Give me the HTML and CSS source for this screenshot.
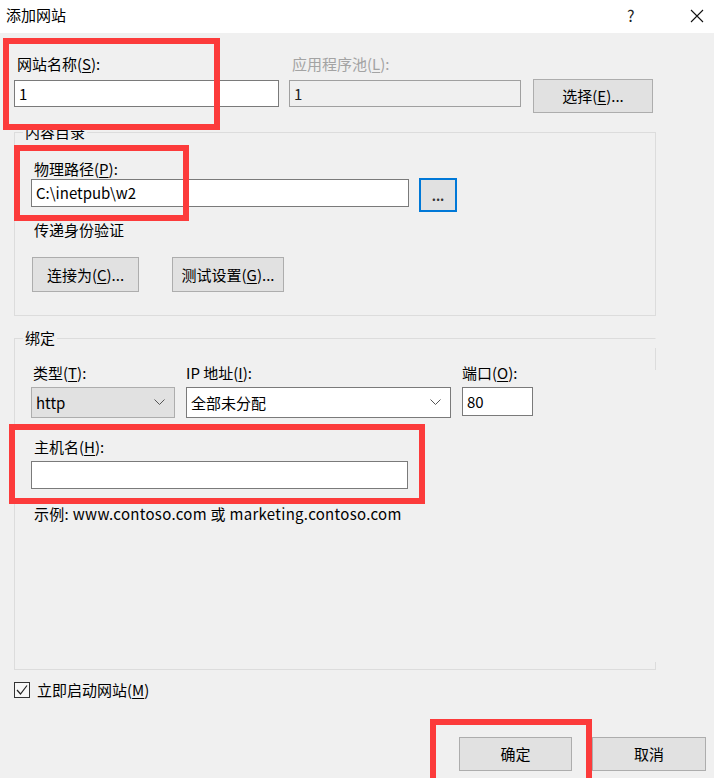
FILE: index.html
```html
<!DOCTYPE html>
<html lang="zh-CN">
<head>
    <meta charset="UTF-8">
    <meta name="viewport" content="width=device-width, initial-scale=1.0">
    <title>添加网站</title>
    <link rel="stylesheet" href="styles.css">
</head>
<body>
    <div class="titlebar">
        <span class="title">添加网站</span>
        <span class="title-help">?</span>
        <span class="title-close">
            <svg width="14" height="14" viewBox="0 0 14 14"><path d="M1 1 L13 13 M13 1 L1 13" stroke="#111" stroke-width="1.1" fill="none"/></svg>
        </span>
    </div>

    <div class="dialog">
        <!-- site name / app pool -->
        <div class="site-row">
            <div class="field name-field">
                <label class="lbl">网站名称(<u>S</u>):</label>
                <div class="textbox">1</div>
            </div>
            <div class="field pool-field">
                <label class="lbl disabled">应用程序池(<u>L</u>):</label>
                <div class="textbox readonly">1</div>
            </div>
            <button class="btn select-btn">选择(<u>E</u>)...</button>
        </div>

        <fieldset class="group content-group">
            <legend>内容目录</legend>
            <div class="group-inner">
                <label class="lbl">物理路径(<u>P</u>):</label>
                <div class="path-row">
                    <div class="textbox path-box">C:\inetpub\w2</div>
                    <button class="btn browse-btn">...</button>
                </div>
                <div class="note">传递身份验证</div>
                <div class="btn-row">
                    <button class="btn connect-btn">连接为(<u>C</u>)...</button>
                    <button class="btn test-btn">测试设置(<u>G</u>)...</button>
                </div>
            </div>
        </fieldset>

        <fieldset class="group binding-group">
            <legend>绑定</legend>
            <div class="group-inner">
                <div class="binding-row">
                    <div class="field">
                        <label class="lbl">类型(<u>T</u>):</label>
                        <div class="combo combo-type">
                            <span>http</span>
                            <svg width="11" height="7" viewBox="0 0 11 7"><path d="M0.5 0.5 L5.5 5.5 L10.5 0.5" stroke="#555" stroke-width="1" fill="none"/></svg>
                        </div>
                    </div>
                    <div class="field">
                        <label class="lbl">IP 地址(<u>I</u>):</label>
                        <div class="combo combo-ip">
                            <span>全部未分配</span>
                            <svg width="11" height="7" viewBox="0 0 11 7"><path d="M0.5 0.5 L5.5 5.5 L10.5 0.5" stroke="#555" stroke-width="1" fill="none"/></svg>
                        </div>
                    </div>
                    <div class="field">
                        <label class="lbl">端口(<u>O</u>):</label>
                        <div class="textbox port-box">80</div>
                    </div>
                </div>
                <label class="lbl host-lbl">主机名(<u>H</u>):</label>
                <div class="textbox host-box"></div>
                <div class="note example">示例: www.contoso.com 或 marketing.contoso.com</div>
            </div>
        </fieldset>

        <div class="check-row">
            <span class="checkbox">
                <svg width="14" height="14" viewBox="0 0 14 14"><path d="M2 7 L5.5 11 L12 2.5" stroke="#222" stroke-width="1.2" fill="none"/></svg>
            </span>
            <span class="check-lbl">立即启动网站(<u>M</u>)</span>
        </div>

        <div class="footer">
            <button class="btn ok-btn">确定</button>
            <button class="btn cancel-btn">取消</button>
        </div>
    </div>

    <!-- red annotation boxes -->
    <div class="mark mark-name"></div>
    <div class="mark mark-path"></div>
    <div class="mark mark-host"></div>
    <div class="mark mark-ok"></div>
</body>
</html>
```

FILE: styles.css
```css
* {
    box-sizing: border-box;
}

body {
    margin: 0;
    width: 714px;
    height: 778px;
    overflow: hidden;
    position: relative;
    background: #f0f0f0;
    font-family: "Noto Sans CJK SC", "Noto Sans", sans-serif;
    font-size: 15px;
    line-height: 20px;
    color: #000;
}

u {
    text-decoration: underline;
    text-underline-offset: 2px;
}

.titlebar {
    height: 33px;
    background: #fff;
    display: flex;
    align-items: flex-start;
    padding: 5px 0 0 6px;
}

.title {
    flex: 1;
}

.title-help {
    width: 20px;
    margin-right: 43px;
    font-size: 16px;
    color: #222;
}

.title-close {
    width: 24px;
    padding-top: 2px;
}

.dialog {
    padding: 21px 0 0 14px;
}

.lbl {
    display: block;
    margin-left: 3px;
}

.lbl.disabled {
    color: #a3a3a3;
}

.textbox {
    height: 27px;
    background: #fff;
    border: 1px solid #7a7a7a;
    padding: 2px 4px;
    line-height: 21px;
}

.textbox.readonly {
    background: #f0f0f0;
    border-color: #a0a0a0;
    color: #222;
}

.btn {
    font: inherit;
    color: #000;
    background: #e1e1e1;
    border: 1px solid #adadad;
    padding: 0;
    cursor: pointer;
}

/* first row */
.site-row {
    display: flex;
    align-items: flex-end;
}

.site-row .lbl {
    margin-bottom: 6px;
}

.name-field {
    width: 265px;
}

.pool-field {
    width: 232px;
    margin-left: 10px;
}

.select-btn {
    width: 120px;
    height: 34px;
    margin-left: 12px;
    margin-bottom: -6px;
}

/* group boxes */
.group {
    margin: 15px 0 0;
    padding: 0;
    width: 642px;
    border: 1px solid #dcdcdc;
    min-width: 0;
}

.group legend {
    margin-left: 8px;
    padding: 0 2px;
}

.group-inner {
    padding: 0 0 0 16px;
}

.content-group .group-inner {
    padding-top: 17px;
    padding-bottom: 23px;
}

.path-row {
    display: flex;
    align-items: flex-start;
}

.path-box {
    width: 378px;
    height: 28px;
}

.browse-btn {
    width: 38px;
    height: 34px;
    margin: -1px 0 0 10px;
    border: 2px solid #0078d7;
    font-size: 13px;
    font-weight: bold;
    line-height: 14px;
    padding-top: 2px;
    color: #333;
}

.note {
    margin: 8px 0 0 3px;
}

.btn-row {
    display: flex;
    gap: 33px;
    margin: 17px 0 0 1px;
}

.connect-btn {
    width: 107px;
    height: 35px;
}

.test-btn {
    width: 112px;
    height: 35px;
}

.binding-group {
    margin-top: 12px;
    height: 342px;
    position: relative;
    border-right-color: transparent;
}

.binding-group::before,
.binding-group::after {
    content: "";
    position: absolute;
    right: -1px;
    width: 1px;
    background: #dcdcdc;
}

.binding-group::before {
    top: 0;
    height: 22px;
}

.binding-group::after {
    bottom: -1px;
    height: 8px;
}

.binding-group .group-inner {
    padding-top: 15px;
    padding-left: 16px;
}

.binding-row {
    display: flex;
    align-items: flex-start;
}

.binding-row .lbl {
    margin-left: 2px;
    margin-bottom: 4px;
}

.binding-row .field + .field {
    margin-left: 11px;
}

.binding-row .field + .field .lbl {
    margin-left: 0;
}

.combo {
    height: 31px;
    display: flex;
    align-items: center;
    justify-content: space-between;
    padding: 0 9px 0 4px;
}

.combo-type {
    width: 144px;
    background: #e1e1e1;
    border: 1px solid #adadad;
}

.combo-ip {
    width: 265px;
    background: #fff;
    border: 1px solid #7a7a7a;
}

.port-box {
    width: 71px;
    height: 29px;
    line-height: 23px;
}

.host-lbl {
    margin-top: 19px;
}

.host-box {
    width: 377px;
    height: 28px;
    margin-top: 4px;
}

.example {
    margin-top: 15px;
    letter-spacing: 0.3px;
}

/* checkbox */
.check-row {
    display: flex;
    align-items: center;
    margin-top: 10px;
}

.checkbox {
    width: 16px;
    height: 16px;
    border: 1px solid #333;
    background: #f7f7f7;
    display: flex;
    align-items: center;
    justify-content: center;
}

.check-lbl {
    margin-left: 7px;
}

.footer {
    display: flex;
    justify-content: flex-end;
    gap: 20px;
    margin-top: 37px;
    padding-right: 8px;
}

.ok-btn {
    width: 113px;
    height: 34px;
}

.cancel-btn {
    width: 114px;
    height: 34px;
}

/* annotation overlays */
.mark {
    position: absolute;
    border: 6px solid #fc3b3b;
}

.mark-name {
    left: 3px;
    top: 38px;
    width: 217px;
    height: 92px;
}

.mark-path {
    left: 14px;
    top: 145px;
    width: 175px;
    height: 76px;
}

.mark-host {
    left: 9px;
    top: 424px;
    width: 416px;
    height: 80px;
}

.mark-ok {
    left: 430px;
    top: 719px;
    width: 162px;
    height: 66px;
}
```
